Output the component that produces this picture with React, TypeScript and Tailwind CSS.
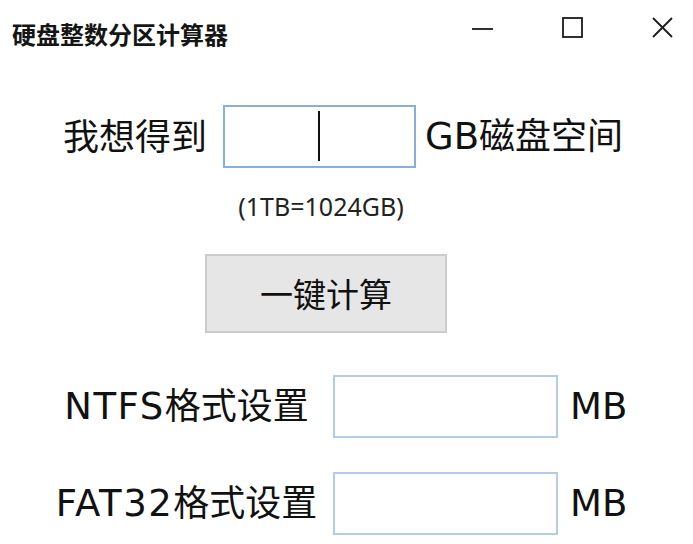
import { useState } from 'react'

const FONT = '"Noto Sans", "Noto Sans CJK SC", sans-serif'

// Latin runs in the labels are wider than Noto Sans, closer to DejaVu
function Lat({ children, wide }: { children: string; wide?: boolean }) {
  return (
    <span className={`font-['DejaVu_Sans',sans-serif] text-[37px] ${wide ? 'tracking-[1.5px]' : ''}`}>
      {children}
    </span>
  )
}

function TitleBar() {
  return (
    <div className="flex h-[105px] items-start justify-between">
      <h1 className="ml-[12px] mt-[23px] text-[24px] leading-none font-bold text-[#151515]">
        硬盘整数分区计算器
      </h1>
      <div className="mr-[20px] mt-[17px] flex gap-[69px]">
        {/* minimize */}
        <svg width="21" height="21" viewBox="0 0 21 21">
          <line x1="0" y1="12" x2="21" y2="12" stroke="#1a1a1a" strokeWidth="1.8" />
        </svg>
        {/* maximize */}
        <svg width="21" height="21" viewBox="0 0 21 21">
          <rect x="1" y="1" width="19" height="19" fill="none" stroke="#1a1a1a" strokeWidth="1.8" />
        </svg>
        {/* close */}
        <svg width="21" height="21" viewBox="0 0 21 21">
          <path d="M1 1 L20 20 M20 1 L1 20" stroke="#1a1a1a" strokeWidth="1.8" />
        </svg>
      </div>
    </div>
  )
}

export default function App() {
  const [gb, setGb] = useState('')
  const [ntfs, setNtfs] = useState('')
  const [fat32, setFat32] = useState('')

  return (
    <div className="h-[544px] w-[693px] overflow-hidden bg-white text-[#111]" style={{ fontFamily: FONT }}>
      <TitleBar />

      {/* size input */}
      <div className="flex h-[63px] items-center">
        <span className="ml-[63px] text-[36px] leading-none">我想得到</span>
        <div className="relative ml-[16px] h-[63px] w-[193px] border-2 border-[#8aaed8]">
          <input
            value={gb}
            onChange={(e) => setGb(e.target.value)}
            className="h-full w-full bg-transparent text-center text-[36px] outline-none"
          />
          <span className="absolute left-[93px] top-[4px] h-[50px] w-[2px] bg-[#111]" />
        </div>
        <span className="ml-[9px] text-[36px] leading-none">
          <Lat>GB</Lat>磁盘空间
        </span>
      </div>

      <div className="ml-[223px] mt-[23px] w-[196px] text-center text-[25px] leading-[30px] text-[#222]">
        (1TB=1024GB)
      </div>

      <button className="ml-[205px] mt-[33px] h-[79px] w-[242px] border-2 border-[#cccccc] bg-[#e6e6e6] pt-[2px] text-[33px] leading-none text-[#111]">
        一键计算
      </button>

      {/* results */}
      <div className="mt-[42px] grid grid-cols-[293px_225px_auto] items-center gap-y-[34px] pl-[40px]">
        <span className="text-center text-[36px] leading-none">
          <Lat wide>NTFS</Lat>格式设置
        </span>
        <input
          value={ntfs}
          onChange={(e) => setNtfs(e.target.value)}
          className="h-[63px] w-[225px] border-2 border-[#b3cde8] bg-white px-2 text-[32px] outline-none"
        />
        <span className="ml-[12px] text-[36px] leading-none">
          <Lat>MB</Lat>
        </span>

        <span className="text-center text-[36px] leading-none">
          <Lat wide>FAT32</Lat>格式设置
        </span>
        <input
          value={fat32}
          onChange={(e) => setFat32(e.target.value)}
          className="h-[63px] w-[225px] border-2 border-[#b3cde8] bg-white px-2 text-[32px] outline-none"
        />
        <span className="ml-[12px] text-[36px] leading-none">
          <Lat>MB</Lat>
        </span>
      </div>
    </div>
  )
}
